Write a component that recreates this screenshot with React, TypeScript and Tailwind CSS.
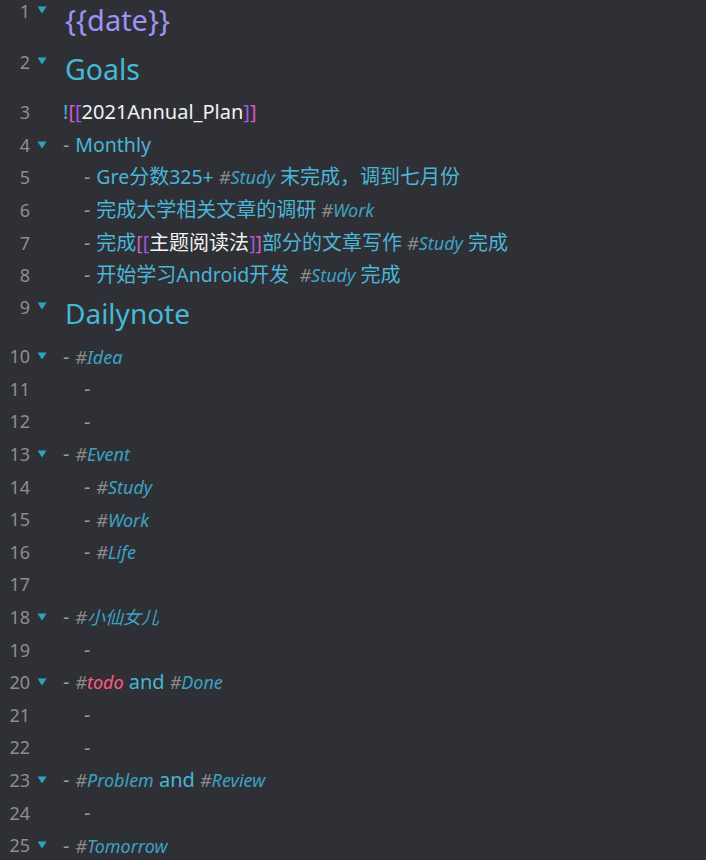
import React from "react";

const F = { fontFamily: '"Noto Sans", "Noto Sans CJK SC", sans-serif' };

function Tag({ t, c = "text-[#3ba2c4]" }: { t: string; c?: string }) {
  return (
    <span className="italic text-[18px]">
      <span className="text-[#8c8c8c]">#</span>
      <span className={c}>{t}</span>
    </span>
  );
}
const Dash = () => <span className="text-[#9a9a9a] mr-[6px]">-</span>;

function Mix({ s, cls }: { s: string; cls: string }) {
  const parts = s.match(/[\u3000-\u9fff\uff00-\uffef]+|[^\u3000-\u9fff\uff00-\uffef]+/g) ?? [];
  return (
    <span className={cls}>
      {parts.map((p, i) =>
        /[\u3000-\u9fff\uff00-\uffef]/.test(p) ? (
          <span key={i} className="text-[20px]">{p}</span>
        ) : (
          <span key={i}>{p}</span>
        )
      )}
    </span>
  );
}
const Cy = ({ s }: { s: string }) => <Mix s={s} cls="text-[#4ab5d5]" />;
const Wh = ({ s }: { s: string }) => <Mix s={s} cls="text-[#f2f2f2]" />;
const L1 = () => <><span className="text-[#d85ac4]">[</span><span className="text-[#a455e0]">[</span></>;
const R1 = () => <><span className="text-[#a455e0]">]</span><span className="text-[#d85ac4]">]</span></>;

type Row = { n: number; tri?: boolean; h: string; numPad: string; indent?: number; content?: React.ReactNode; heading?: boolean; cPad?: string };

const rows: Row[] = [
  { n: 1, tri: true, h: "h-[40px]", numPad: "pt-[2px]", heading: true, cPad: "pb-[1px]", content: <span className="text-[29px] text-[#9d93f3] leading-[38px]">{"{{date}}"}</span> },
  { n: 2, tri: true, h: "h-[56px]", numPad: "pt-[13px]", heading: true, cPad: "pt-[2px]", content: <span className="text-[28.5px] text-[#46b8d4] leading-[38px]">Goals</span> },
  { n: 3, h: "h-[32.6px]", numPad: "", content: <span className="text-[20px]"><span className="text-[#4ab5d5]">!</span><L1 /><span className="text-[#f2f2f2]">2021Annual_Plan</span><R1 /></span> },
  { n: 4, tri: true, h: "h-[32.6px]", numPad: "", indent: 0, content: <><Dash /><Cy s="Monthly" /></> },
  { n: 5, h: "h-[32.6px]", numPad: "", indent: 1, content: <><Dash /><Cy s="Gre分数325+" /> <Tag t="Study" /> <Cy s="末完成，调到七月份" /></> },
  { n: 6, h: "h-[32.6px]", numPad: "", indent: 1, content: <><Dash /><Cy s="完成大学相关文章的调研" /> <Tag t="Work" /></> },
  { n: 7, h: "h-[32.6px]", numPad: "", indent: 1, content: <><Dash /><Cy s="完成" /><L1 /><Wh s="主题阅读法" /><R1 /><Cy s="部分的文章写作" /> <Tag t="Study" /> <Cy s="完成" /></> },
  { n: 8, h: "h-[32.6px]", numPad: "", indent: 1, content: <><Dash /><Cy s="开始学习Android开发" />{"  "}<Tag t="Study" /> <Cy s="完成" /></> },
  { n: 9, tri: true, h: "h-[48.4px]", numPad: "pt-[6px]", heading: true, cPad: "pb-[5px]", content: <span className="text-[28px] text-[#46b8d4] leading-[38px]">Dailynote</span> },
  { n: 10, tri: true, h: "h-[32.6px]", numPad: "", indent: 0, content: <><Dash /><Tag t="Idea" /></> },
  { n: 11, h: "h-[32.6px]", numPad: "", indent: 1, content: <Dash /> },
  { n: 12, h: "h-[32.6px]", numPad: "", indent: 1, content: <Dash /> },
  { n: 13, tri: true, h: "h-[32.6px]", numPad: "", indent: 0, content: <><Dash /><Tag t="Event" /></> },
  { n: 14, h: "h-[32.6px]", numPad: "", indent: 1, content: <><Dash /><Tag t="Study" /></> },
  { n: 15, h: "h-[32.6px]", numPad: "", indent: 1, content: <><Dash /><Tag t="Work" /></> },
  { n: 16, h: "h-[32.6px]", numPad: "", indent: 1, content: <><Dash /><Tag t="Life" /></> },
  { n: 17, h: "h-[32.6px]", numPad: "" },
  { n: 18, tri: true, h: "h-[32.6px]", numPad: "", indent: 0, content: <><Dash /><Tag t="小仙女儿" /></> },
  { n: 19, h: "h-[32.6px]", numPad: "", indent: 1, content: <Dash /> },
  { n: 20, tri: true, h: "h-[32.6px]", numPad: "", indent: 0, content: <><Dash /><Tag t="todo" c="text-[#ff5a86]" /> <span className="text-[20px] text-[#4ab5d5]">and</span> <Tag t="Done" /></> },
  { n: 21, h: "h-[32.6px]", numPad: "", indent: 1, content: <Dash /> },
  { n: 22, h: "h-[32.6px]", numPad: "", indent: 1, content: <Dash /> },
  { n: 23, tri: true, h: "h-[32.6px]", numPad: "", indent: 0, content: <><Dash /><Tag t="Problem" /> <span className="text-[20px] text-[#4ab5d5]">and</span> <Tag t="Review" /></> },
  { n: 24, h: "h-[32.6px]", numPad: "", indent: 1, content: <Dash /> },
  { n: 25, tri: true, h: "h-[32.6px]", numPad: "", indent: 0, content: <><Dash /><Tag t="Tomorrow" /></> },
];

function Tri() {
  return (
    <svg width="10" height="8" viewBox="0 0 10 8" className="block">
      <path d="M0.5 0.5 L9.5 0.5 L5 7.5 Z" fill="#2fa3c2" />
    </svg>
  );
}

export default function App() {
  return (
    <div className="w-[706px] h-[860px] overflow-hidden bg-[#2f3035]" style={F}>
      {rows.map((r) => (
        <div key={r.n} className={`flex ${r.h}`}>
          <div className={`w-[30px] shrink-0 flex ${r.heading ? "items-start" : "items-center"} justify-end text-[18px] text-[#8e8e8e] leading-none ${r.numPad}`}>
            {r.n}
          </div>
          <div className={`w-[33px] shrink-0 flex ${r.heading ? "items-start" : "items-center"} justify-center ${r.numPad}`}>
            {r.tri ? <div className={r.heading ? "mt-[4px] ml-[-9px]" : "ml-[-9px]"}><Tri /></div> : null}
          </div>
          <div className={`flex items-center ${r.cPad ?? ""} ${r.indent === 1 ? "pl-[21px]" : r.heading ? "pl-[2px]" : ""}`}>
            <span className="whitespace-pre text-[19.5px]">{r.content}</span>
          </div>
        </div>
      ))}
    </div>
  );
}
